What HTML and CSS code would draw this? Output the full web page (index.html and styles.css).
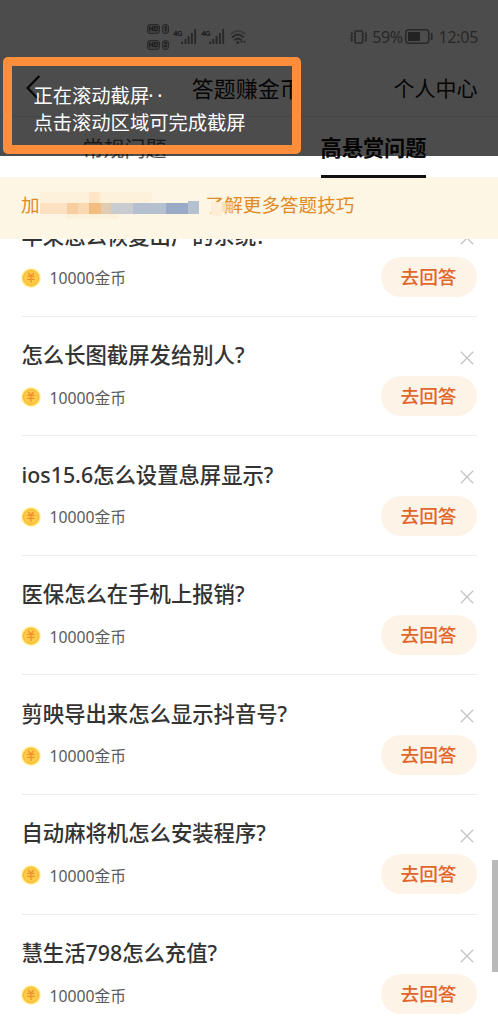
FILE: index.html
```html
<!DOCTYPE html>
<html lang="zh-CN">
<head>
<meta charset="utf-8">
<title>答题赚金币</title>
<link rel="stylesheet" href="styles.css">
</head>
<body>
<svg width="0" height="0" class="defs">
  <symbol id="coin" viewBox="0 0 20 20">
    <circle cx="10" cy="10" r="10" fill="#fff3ae"/>
    <circle cx="10" cy="10" r="9" fill="#ffdf5a"/>
    <circle cx="10" cy="10" r="7.6" fill="#fdcb48" stroke="#f8b43c" stroke-width="1"/>
    <path d="M7.2 5 10 8 12.8 5M6.3 8.4h7.4M6.3 11.4h7.4M10 8v7" fill="none" stroke="#f28d2c" stroke-width="1.2"/>
  </symbol>
  <symbol id="close" viewBox="0 0 14 14">
    <path d="M.8.8 13.2 13.2M13.2.8.8 13.2" fill="none" stroke="#c4c4c4" stroke-width="1.3"/>
  </symbol>
  <symbol id="signal" viewBox="0 0 16 15">
    <path d="M1.2 12.5V15M4.4 10V15M7.6 7V15M10.9 4V15M14.2 0V15" fill="none" stroke="#858585" stroke-width="1.9"/>
  </symbol>
</svg>
<div class="screen">
  <header class="top">
    <div class="status">
      <div class="hd">
        <span class="hd-row"><b class="chip">HD</b><b class="chip sim">1</b></span>
        <span class="hd-row"><b class="chip">HD</b><b class="chip sim">2</b></span>
      </div>
      <span class="cell"><b class="net">4G</b><svg width="16" height="15"><use href="#signal"/></svg></span>
      <span class="cell"><b class="net">4G</b><svg width="16" height="15"><use href="#signal"/></svg></span>
      <svg class="wifi" width="18" height="16" viewBox="0 0 18 16"><g fill="none" stroke-linecap="round"><path d="M1 4.8Q8 -1.2 15 4.8" stroke="#bbb" stroke-width="1.7"/><path d="M2.8 8Q8 3.2 13.2 8M5 10.7Q8 8.2 11 10.7" stroke="#858585" stroke-width="1.9"/></g><circle cx="7.8" cy="13.4" r="1.5" fill="#858585"/><path d="M10.5 12.6h5" stroke="#858585" stroke-width="1.8" stroke-dasharray="2 .8"/></svg>
      <svg class="vibrate" width="18" height="14" viewBox="0 0 18 14" fill="none" stroke="#858585"><rect x="5" y="1" width="7.6" height="12" rx="1.2" stroke-width="1.6"/><path d="M1 2.5l1.3 1.5L1 5.5 2.3 7 1 8.5 2.3 10 1 11.5M16.5 2.5l-1.3 1.5 1.3 1.5L15.2 7l1.3 1.5-1.3 1.5 1.3 1.5" stroke-width="1.4"/></svg>
      <span class="percent">59%</span>
      <svg class="battery" width="28" height="15" viewBox="0 0 28 15"><rect x=".8" y=".8" width="23" height="13.4" rx="3" fill="none" stroke="#858585" stroke-width="1.5"/><rect x="3" y="3" width="12" height="9" rx="1" fill="#777"/><path d="M26.7 4v7" stroke="#858585" stroke-width="1.8"/></svg>
      <span class="clock">12:05</span>
    </div>
    <nav class="nav">
      <svg class="back" width="15" height="26" viewBox="0 0 15 26"><path d="M13.3 1 1.6 13 13.3 25" fill="none" stroke="#111" stroke-width="2.2"/></svg>
      <span class="nav-title">答题赚金币</span>
      <span class="nav-link">个人中心</span>
    </nav>
    <div class="tabs">
      <div class="tab"><span>常规问题</span></div>
      <div class="tab active"><span>高悬赏问题</span></div>
    </div>
  </header>

  <div class="banner">
    <span>加</span>
    <svg class="mosaic" width="160" height="34" viewBox="0 0 160 34">
      <path d="M3 5Q0 6 0 10V24H26V32H78V24H108L113 5Z" fill="#fdebd0" opacity=".5"/>
      <path d="M49 5h11v11H49z" fill="#fde5c5"/>
      <g><path d="M0 16h27v11H0z" fill="#fce0c0"/><path d="M27 16h11v11H27z" fill="#f8cda0"/><path d="M38 16h11v11H38z" fill="#fad8b0"/><path d="M49 16h12v11H49z" fill="#f4bd80"/><path d="M61 16h10v11H61z" fill="#dfccb2"/><path d="M71 16h22v11H71z" fill="#c8ccd0"/><path d="M93 16h33v11H93z" fill="#b4c0d0"/><path d="M126 16h22v11h-22z" fill="#98aac6"/><path d="M148 14h11v13h-11z" fill="#b5c1cf"/></g>
    </svg>
    <span class="tips">了解更多答题技巧</span>
    <svg class="smudge" width="22" height="15" viewBox="0 0 22 15"><path d="M0 0h11v14H6Q1 14 0 12Z" fill="#feeed8"/><path d="M11 0h11v10H11z" fill="#fad2a2" opacity=".6"/></svg>
  </div>

  <main class="list">
    <section class="row"><div class="line"><h2>苹果怎么恢复出厂的系统?</h2><svg class="x" width="14" height="14"><use href="#close"/></svg></div><div class="line"><p><svg width="20" height="20"><use href="#coin"/></svg>10000金币</p><button>去回答</button></div></section>
    <section class="row"><div class="line"><h2>怎么长图截屏发给别人?</h2><svg class="x" width="14" height="14"><use href="#close"/></svg></div><div class="line"><p><svg width="20" height="20"><use href="#coin"/></svg>10000金币</p><button>去回答</button></div></section>
    <section class="row"><div class="line"><h2>ios15.6怎么设置息屏显示?</h2><svg class="x" width="14" height="14"><use href="#close"/></svg></div><div class="line"><p><svg width="20" height="20"><use href="#coin"/></svg>10000金币</p><button>去回答</button></div></section>
    <section class="row"><div class="line"><h2>医保怎么在手机上报销?</h2><svg class="x" width="14" height="14"><use href="#close"/></svg></div><div class="line"><p><svg width="20" height="20"><use href="#coin"/></svg>10000金币</p><button>去回答</button></div></section>
    <section class="row"><div class="line"><h2>剪映导出来怎么显示抖音号?</h2><svg class="x" width="14" height="14"><use href="#close"/></svg></div><div class="line"><p><svg width="20" height="20"><use href="#coin"/></svg>10000金币</p><button>去回答</button></div></section>
    <section class="row"><div class="line"><h2>自动麻将机怎么安装程序?</h2><svg class="x" width="14" height="14"><use href="#close"/></svg></div><div class="line"><p><svg width="20" height="20"><use href="#coin"/></svg>10000金币</p><button>去回答</button></div></section>
    <section class="row"><div class="line"><h2>慧生活798怎么充值?</h2><svg class="x" width="14" height="14"><use href="#close"/></svg></div><div class="line"><p><svg width="20" height="20"><use href="#coin"/></svg>10000金币</p><button>去回答</button></div></section>
  </main>

  <div class="shade"></div>
  <div class="toast">正在滚动截屏<span class="dots">··</span><br>点击滚动区域可完成截屏</div>
  <div class="scrollbar"></div>
</div>
</body>
</html>
```
FILE: styles.css
```css
* { box-sizing: border-box; }
body {
  margin: 0;
  background: #fff;
  font-family: "Noto Sans", "Noto Sans CJK SC", sans-serif;
}
svg { display: block; flex: none; }
.defs { position: absolute; }
.screen {
  position: relative;
  width: 498px;
  height: 1020px;
  overflow: hidden;
  background: #fff;
}

/* status bar */
.status {
  display: flex;
  align-items: center;
  height: 59px;
  padding: 14px 20px 0 147px;
  color: #858585;
}
.hd { display: flex; flex-direction: column; gap: 6px; }
.hd-row { display: flex; gap: 2px; }
.chip {
  width: 13px;
  height: 10px;
  border: 1px solid #858585;
  border-radius: 3px;
  background: #d0d0d0;
  color: #555;
  font: 700 7px/8px Roboto, sans-serif;
  display: flex;
  justify-content: center;
}
.sim { width: 7px; }
.cell { display: flex; align-items: flex-start; margin-left: 5px; width: 23px; }
.cell + .cell { margin-left: 5px; }
.net { font: 700 8px/9px Roboto, sans-serif; width: 7px; margin-left: -1px; letter-spacing: -.6px; color: #666; flex: none; }
.cell svg { margin-left: 1px; }
.wifi { margin-left: 5px; }
.vibrate { margin-left: auto; }
.percent, .clock { font: 400 16px/20px "Noto Sans", sans-serif; }
.percent { margin-left: 4px; letter-spacing: -.4px; }
.battery { margin-left: 2px; }
.clock { margin-left: 6px; letter-spacing: -.3px; }

/* title bar */
.nav {
  display: grid;
  grid-template-columns: 1fr auto 1fr;
  align-items: center;
  height: 58px;
  padding: 0 20.5px 0 26px;
  border-bottom: 1px solid #e8e8e8;
  color: #111;
  line-height: 30px;
}
.nav-title { font-size: 22px; margin: 0 5px 0 -5px; }
.nav-link { font-size: 21px; text-align: right; }

.tabs {
  position: relative;
  z-index: 2;
  display: grid;
  grid-template-columns: 1fr 1fr;
  height: 61px;
}
.tab { display: flex; justify-content: center; font-size: 21px; line-height: 62px; color: #555; }
.tab span { height: 61px; }
.tab.active { color: #111; font-weight: 600; font-size: 21.2px; }
.tab.active span { border-bottom: 3px solid #111; }

/* promo strip */
.banner {
  position: relative;
  z-index: 1;
  display: flex;
  align-items: center;
  height: 62px;
  margin-top: -1px;
  padding: 0 21px 10px;
  background: #fef6e5;
  color: #e08a25;
  font-size: 18.6px;
}
.mosaic { margin-top: 2px; }
.tips { margin-left: 6px; }
.smudge { position: absolute; left: 211px; top: 25px; }

/* questions */
.list { margin-top: -42px; padding: 0 21.5px; }
.row {
  height: 119.6px;
  padding-top: 23.5px;
  border-bottom: 1px solid #ececec;
}
.line { display: flex; align-items: center; justify-content: space-between; }
.row h2 {
  margin: 0;
  font-size: 21.35px;
  font-weight: 500;
  line-height: 30px;
  color: #333;
}
.x { margin: 5px 2.5px 0 0; }
.row p {
  display: flex;
  align-items: center;
  gap: 9px;
  margin: 8px 0 0;
  font-size: 15.75px;
  color: #5a5a5a;
}
.row p svg { margin-left: -1px; }
.row button {
  width: 96px;
  height: 40px;
  margin: 6px 0 0;
  padding: 0 0 2px;
  border: 0;
  border-radius: 20px;
  background: #fef3e7;
  color: #e0662b;
  font: 500 18.7px/38px "Noto Sans CJK SC", sans-serif;
}

/* capture overlay */
.shade {
  position: absolute;
  z-index: 3;
  inset: 0 0 auto;
  height: 156px;
  background: rgba(0, 0, 0, .7);
}
.toast {
  position: absolute;
  z-index: 4;
  left: 3px;
  top: 57px;
  width: 298px;
  height: 97px;
  padding: 17px 0 0 21.5px;
  border: 9px solid #ff8e3c;
  border-radius: 5px;
  color: #fff;
  font-size: 19.3px;
  line-height: 26.5px;
  white-space: nowrap;
}
.dots { letter-spacing: 4px; margin-left: -1px; }
.scrollbar {
  position: absolute;
  right: 0;
  top: 860px;
  width: 6px;
  height: 112px;
  background: #b9b9b9;
}
```
